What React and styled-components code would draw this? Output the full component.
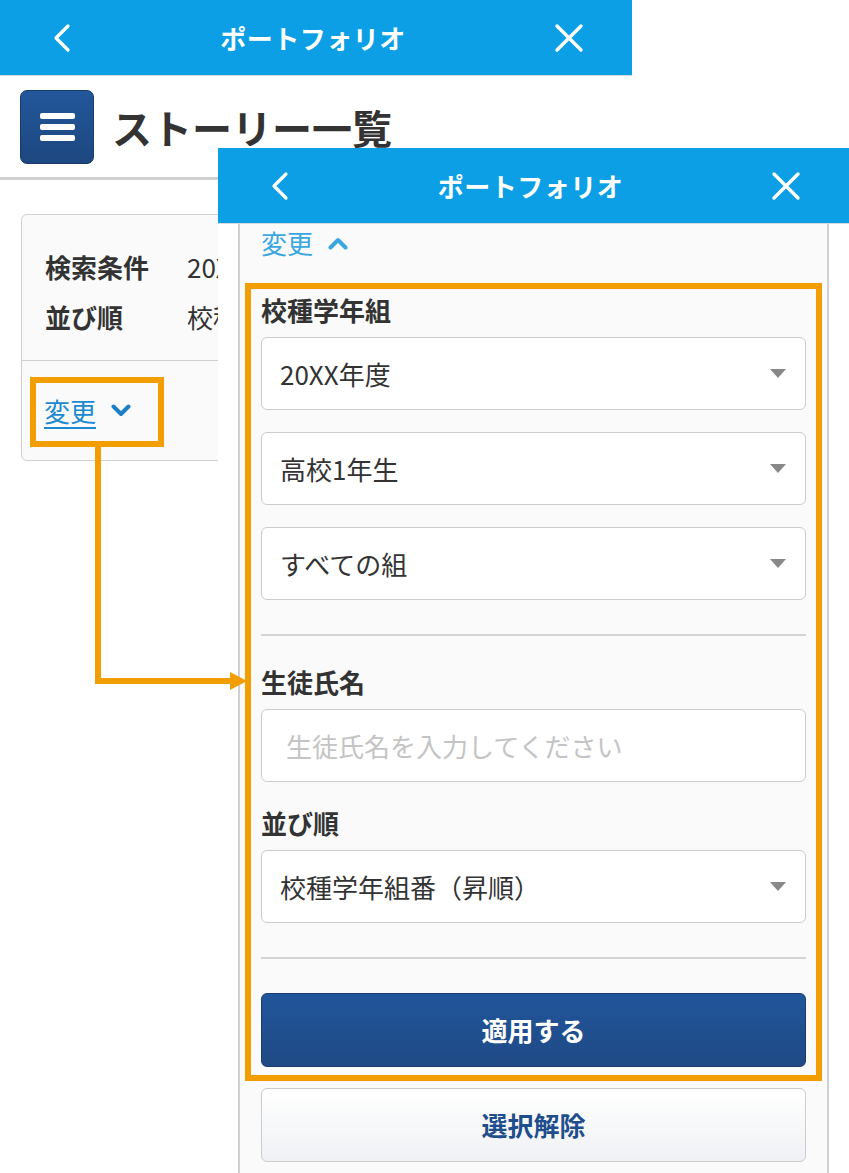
import React from "react";
import styled, { createGlobalStyle } from "styled-components";

const GlobalStyle = createGlobalStyle`
  html, body {
    margin: 0;
    padding: 0;
    background: #ffffff;
  }
  body {
    font-family: "Noto Sans CJK JP", "Noto Sans", sans-serif;
    color: #333333;
  }
  * { box-sizing: border-box; }
`;

const ORANGE = "#f29e00";
const NAVY = "#1f4e8c";

const Canvas = styled.div`
  position: relative;
  width: 849px;
  height: 1173px;
  overflow: hidden;
  background: #ffffff;
`;

const Screen = styled.div`
  width: ${(p) => p.$width}px;
  background: #ffffff;
  display: flex;
  flex-direction: column;
`;

const FrontScreen = styled(Screen)`
  position: absolute;
  left: 218px;
  top: 148px;
  height: 1025px;
  overflow: hidden;
`;

const Header = styled.div`
  height: ${(p) => p.$height}px;
  flex-shrink: 0;
  background: #0c9fe6;
  border-bottom: 1px solid #d9d9d9;
  display: flex;
  align-items: center;
  justify-content: space-between;
  padding: 0 48px 0 52px;
`;

const HeaderTitle = styled.div`
  color: #ffffff;
  font-size: 26px;
  line-height: 36px;
  font-weight: 700;
  letter-spacing: 0.5px;
`;

const HeaderIcon = styled.svg`
  display: block;
  flex-shrink: 0;
`;

const TitleRow = styled.div`
  height: 104px;
  display: flex;
  align-items: center;
  gap: 18px;
  padding: 0 20px;
  border-bottom: 3px solid #cfcfcf;
`;

const MenuButton = styled.div`
  width: 74px;
  height: 74px;
  border-radius: 7px;
  background: linear-gradient(#22579b, #1d477f);
  border: 1px solid #183b6a;
  display: flex;
  flex-direction: column;
  align-items: center;
  justify-content: center;
  gap: 5px;
`;

const MenuBar = styled.span`
  width: 35px;
  height: 6px;
  border-radius: 2px;
  background: #ffffff;
`;

const PageTitle = styled.h1`
  margin: 0;
  font-size: 40px;
  line-height: 50px;
  font-weight: 700;
  color: #333333;
`;

const Card = styled.div`
  margin: 34px 21px 0 21px;
  border: 1px solid #d0d0d0;
  border-radius: 6px;
  background: #fafafa;
`;

const CardBody = styled.div`
  padding: 27px 0 18px 23px;
  border-bottom: 1px solid #d0d0d0;
`;

const InfoRow = styled.div`
  height: 50px;
  display: flex;
  align-items: center;
  font-size: 26px;
  line-height: 36px;
  white-space: nowrap;
`;

const InfoLabel = styled.span`
  width: 142px;
  font-weight: 700;
`;

const InfoValue = styled.span`
  font-weight: 400;
`;

const CardFooter = styled.div`
  height: 99px;
  display: flex;
  align-items: center;
  padding-left: 22px;
`;

const ToggleLink = styled.a`
  display: inline-flex;
  align-items: center;
  gap: 15px;
  font-size: 26px;
  line-height: 34px;
  color: ${(p) => p.$color};
  text-decoration: none;
  span {
    text-decoration: ${(p) => (p.$underline ? "underline" : "none")};
    text-underline-offset: 5px;
    text-decoration-thickness: 1.5px;
  }
`;

const FrontBody = styled.div`
  flex: 1;
  padding: 0 20px;
`;

const Panel = styled.div`
  height: 100%;
  background: #fafafa;
  border-left: 2px solid #d0d0d0;
  border-right: 2px solid #d0d0d0;
  padding: 0 21px;
  display: flex;
  flex-direction: column;
`;

const ToggleRow = styled.div`
  height: 38px;
  display: flex;
  align-items: center;
`;

const FieldLabel = styled.div`
  font-size: 26px;
  font-weight: 700;
  line-height: 34px;
  margin-top: ${(p) => p.$top}px;
  margin-bottom: 10px;
  color: #333333;
`;

const SelectBox = styled.div`
  height: 73px;
  margin-top: ${(p) => p.$top || 0}px;
  background: #ffffff;
  border: 1.5px solid #cccccc;
  border-radius: 6px;
  display: flex;
  align-items: center;
  justify-content: space-between;
  padding: 0 19px 0 18px;
  font-size: 26px;
  line-height: 34px;
  color: ${(p) => (p.$placeholder ? "#c4c4c4" : "#333333")};
  padding-left: ${(p) => (p.$placeholder ? 24 : 18)}px;
`;

const Caret = styled.span`
  width: 0;
  height: 0;
  border-left: 8px solid transparent;
  border-right: 8px solid transparent;
  border-top: 9px solid #888888;
`;

const Divider = styled.div`
  height: 2px;
  background: #d4d4d4;
  margin-top: ${(p) => p.$top}px;
`;

const Button = styled.div`
  height: 74px;
  margin-top: ${(p) => p.$top}px;
  border-radius: 6px;
  display: flex;
  align-items: center;
  justify-content: center;
  font-size: 26px;
  line-height: 34px;
  font-weight: 700;
  color: ${(p) => (p.$primary ? "#ffffff" : NAVY)};
  background: ${(p) =>
    p.$primary
      ? "linear-gradient(#21559b, #1f4a85)"
      : "linear-gradient(#ffffff, #eff1f4)"};
  border: 1.5px solid ${(p) => (p.$primary ? "#1a3d6d" : "#cccccc")};
`;

const Highlight = styled.div`
  position: absolute;
  border: 6px solid ${ORANGE};
  pointer-events: none;
`;

const Connector = styled.svg`
  position: absolute;
  left: 0;
  top: 0;
  pointer-events: none;
`;

const BackIcon = () => (
  <HeaderIcon width="20" height="30" viewBox="0 0 20 30">
    <polyline points="16,3 4,15 16,27" fill="none" stroke="#fff" strokeWidth="3.2" strokeLinecap="round" strokeLinejoin="round" />
  </HeaderIcon>
);

const CloseIcon = () => (
  <HeaderIcon width="30" height="30" viewBox="0 0 30 30">
    <path d="M3 3 L27 27 M27 3 L3 27" fill="none" stroke="#fff" strokeWidth="3.4" strokeLinecap="round" />
  </HeaderIcon>
);

const Chevron = ({ up, color }) => (
  <svg width="20" height="13" viewBox="0 0 20 13">
    <polyline
      points={up ? "2.5,10.5 10,3 17.5,10.5" : "2.5,2.5 10,10 17.5,2.5"}
      fill="none"
      stroke={color}
      strokeWidth="4"
      strokeLinecap="round"
      strokeLinejoin="round"
    />
  </svg>
);

const AppHeader = ({ height }) => (
  <Header $height={height}>
    <BackIcon />
    <HeaderTitle>ポートフォリオ</HeaderTitle>
    <CloseIcon />
  </Header>
);

const Select = ({ children, top }) => (
  <SelectBox $top={top}>
    {children}
    <Caret />
  </SelectBox>
);

export default function App() {
  return (
    <Canvas>
      <GlobalStyle />

      <Screen $width={632}>
        <AppHeader height={76} />
        <TitleRow>
          <MenuButton>
            <MenuBar />
            <MenuBar />
            <MenuBar />
          </MenuButton>
          <PageTitle>ストーリー一覧</PageTitle>
        </TitleRow>
        <Card>
          <CardBody>
            <InfoRow>
              <InfoLabel>検索条件</InfoLabel>
              <InfoValue>20XX年度 高校1年生 すべての組</InfoValue>
            </InfoRow>
            <InfoRow>
              <InfoLabel>並び順</InfoLabel>
              <InfoValue>校種学年組番（昇順）</InfoValue>
            </InfoRow>
          </CardBody>
          <CardFooter>
            <ToggleLink $color="#1c8ad3" $underline>
              <span>変更</span>
              <Chevron color="#1c7fc6" />
            </ToggleLink>
          </CardFooter>
        </Card>
      </Screen>

      <FrontScreen $width={631}>
        <AppHeader height={76} />
        <FrontBody>
          <Panel>
            <ToggleRow>
              <ToggleLink $color="#3aa7e1">
                <span>変更</span>
                <Chevron up color="#3aa7e1" />
              </ToggleLink>
            </ToggleRow>
            <FieldLabel $top={31}>校種学年組</FieldLabel>
            <Select>20XX年度</Select>
            <Select top={22}>高校1年生</Select>
            <Select top={22}>すべての組</Select>
            <Divider $top={34} />
            <FieldLabel $top={29}>生徒氏名</FieldLabel>
            <SelectBox $placeholder>生徒氏名を入力してください</SelectBox>
            <FieldLabel $top={24}>並び順</FieldLabel>
            <Select>校種学年組番（昇順）</Select>
            <Divider $top={34} />
            <Button $primary $top={34}>適用する</Button>
            <Button $top={21}>選択解除</Button>
          </Panel>
        </FrontBody>
      </FrontScreen>

      <Highlight style={{ left: 30, top: 377, width: 134, height: 70 }} />
      <Highlight style={{ left: 245, top: 283, width: 577, height: 798 }} />
      <Connector width="849" height="1173" viewBox="0 0 849 1173">
        <path d="M98 445 V681 H234" fill="none" stroke={ORANGE} strokeWidth="6" />
        <polygon points="230,672 247,681 230,690" fill={ORANGE} />
      </Connector>
    </Canvas>
  );
}
